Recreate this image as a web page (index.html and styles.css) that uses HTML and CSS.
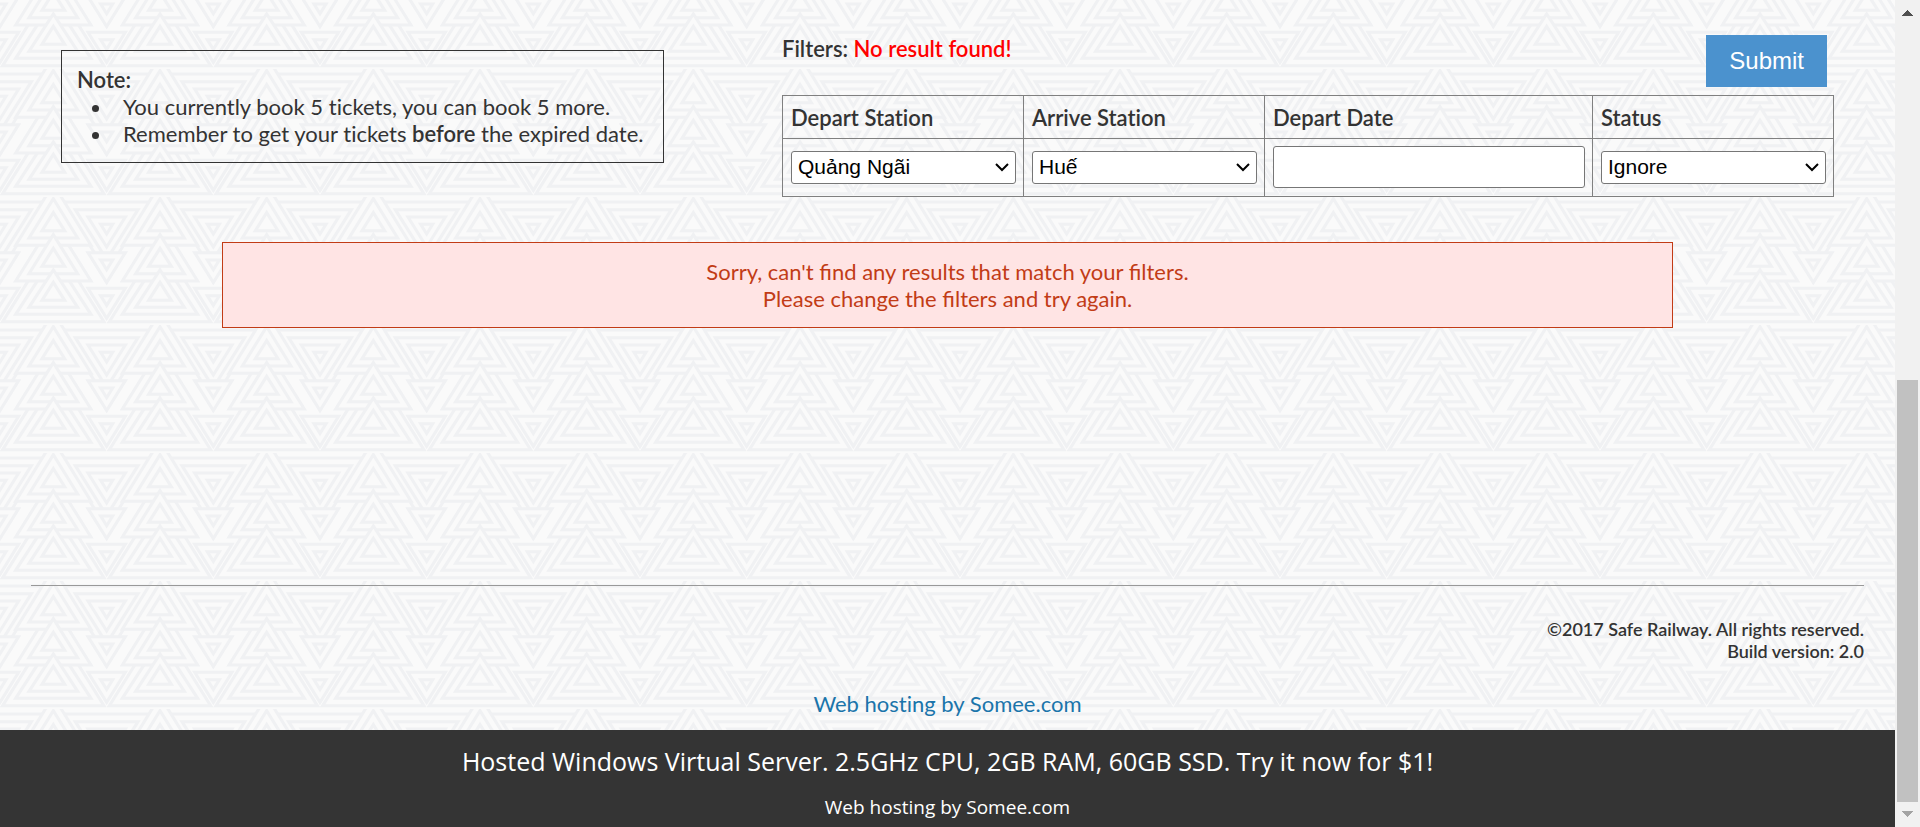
FILE: index.html
```html
<!DOCTYPE html>
<html lang="en">
<head>
<meta charset="utf-8">
<title>Safe Railway</title>
<link rel="stylesheet" href="styles.css">
</head>
<body>
<div class="page">
  <main class="content">
    <div class="top">
      <section class="note">
        <strong>Note:</strong>
        <ul class="note-list">
          <li>You currently book 5 tickets, you can book 5 more.</li>
          <li>Remember to get your tickets <strong>before</strong> the expired date.</li>
        </ul>
      </section>
      <form class="filters">
        <div class="filters-head">
          <strong>Filters: <span class="filters-error">No result found!</span></strong>
          <button class="submit" type="submit">Submit</button>
        </div>
        <table class="filter-table">
          <colgroup><col class="col-select"><col class="col-select"><col class="col-date"><col class="col-select"></colgroup>
          <thead>
            <tr>
              <th><label for="depart">Depart Station</label></th>
              <th><label for="arrive">Arrive Station</label></th>
              <th><label for="date">Depart Date</label></th>
              <th><label for="status">Status</label></th>
            </tr>
          </thead>
          <tbody>
            <tr>
              <td><select id="depart" class="select"><option>Quảng Ngãi</option></select></td>
              <td><select id="arrive" class="select"><option>Huế</option></select></td>
              <td><input id="date" class="date" type="text"></td>
              <td><select id="status" class="select"><option>Ignore</option></select></td>
            </tr>
          </tbody>
        </table>
      </form>
    </div>
    <div class="alert" role="alert">Sorry, can't find any results that match your filters.<br>Please change the filters and try again.</div>
    <footer class="footer">©2017 Safe Railway. All rights reserved.<br>Build version: 2.0</footer>
    <a class="host-link" href="#">Web hosting by Somee.com</a>
    <div class="promo">
      <a class="promo-main" href="#">Hosted Windows Virtual Server. 2.5GHz CPU, 2GB RAM, 60GB SSD. Try it now for $1!</a>
      <a class="promo-sub" href="#">Web hosting by Somee.com</a>
    </div>
  </main>
  <div class="scrollbar" aria-hidden="true">
    <svg class="scroll-arrow" viewBox="0 0 25 25" shape-rendering="crispEdges"><path fill="#505050" d="M7 16 12.500 10 18 16z"/></svg>
    <div class="scroll-space"></div>
    <div class="scroll-thumb"></div>
    <svg class="scroll-arrow" viewBox="0 0 25 25" shape-rendering="crispEdges"><path fill="#a3a3a3" d="M7 9 12.500 15 18 9z"/></svg>
  </div>
</div>
</body>
</html>
```
FILE: styles.css
```css
* { box-sizing: border-box; }

body {
  margin: 0;
  color: #333;
  font: 22px/27px Lato, "Open Sans", sans-serif;
  font-variant-ligatures: none;
}

strong,
th,
.footer {
  font-weight: 600;
}

.page {
  display: flex;
  min-height: 100vh;
  background-color: #fafafa;
  background-position: 0 69px;
  /* triangle weave: inverted triangles first, then the stacked upright ones */
  background-image: url("data:image/svg+xml,%3Csvg xmlns='http://www.w3.org/2000/svg' width='320' height='128' viewBox='0 340 960 384'%3E%3Cdefs%3E%3Cg id='i'%3E%3Cpath d='M-132 355H132L0 566z'/%3E%3Cpath d='M-94 378H94L0 528z'/%3E%3Cpath d='M-56 400H56L0 490z'/%3E%3Cpath d='M-18 422H18L0 451z'/%3E%3Cpath d='M-56 507H56L0 597z'/%3E%3Cpath d='M-18 529H18L0 558z'/%3E%3Cpath d='M-56 614H56L0 704z'/%3E%3Cpath d='M-18 636H18L0 665z'/%3E%3C/g%3E%3Cg id='t'%3E%3Cpath d='M-152 714H152L0 471z'/%3E%3Cpath d='M-113 692H113L0 518z'/%3E%3Cpath d='M-113 592H113L0 411z'/%3E%3Cpath d='M-113 485H113L0 301z'/%3E%3Cpath d='M-73 463H73L0 345z'/%3E%3Cpath d='M-34 441H34L0 387z'/%3E%3Cpath d='M-73 570H73L0 453z'/%3E%3Cpath d='M-34 548H34L0 494z'/%3E%3Cpath d='M-73 671H73L0 559z'/%3E%3Cpath d='M-34 650H34L0 596z'/%3E%3C/g%3E%3C/defs%3E%3Cg fill='%23fafafa' stroke='%23f0f1f3' stroke-width='9'%3E%3Cuse href='%23i'/%3E%3Cuse href='%23i' x='320'/%3E%3Cuse href='%23i' x='640'/%3E%3Cuse href='%23i' x='960'/%3E%3Cuse href='%23t' x='160'/%3E%3Cuse href='%23t' x='480'/%3E%3Cuse href='%23t' x='800'/%3E%3C/g%3E%3C/svg%3E");
}

.content {
  flex: 1;
  display: flex;
  flex-direction: column;
}

.top {
  display: flex;
  justify-content: space-between;
  align-items: flex-start;
  padding: 35px 61px 0;
}

.note {
  margin-top: 15px;
  padding: 15px 20px 15px 15px;
  border: 1px solid #333;
}

.note-list {
  margin: 0;
  padding-left: 36px;
}

.note-list li { padding-left: 10px; }

.filters-head {
  display: flex;
  justify-content: space-between;
  padding-right: 7px;
  margin-bottom: 8px;
}

.filters-error { color: red; }

.submit {
  height: 52px;
  padding: 0 23px;
  border: 0;
  background: #4b92ce;
  color: #fff;
  font: 24px/28px "Liberation Sans", Arial, sans-serif;
}

.filter-table { border-collapse: collapse; }

.filter-table th,
.filter-table td {
  border: 1px solid #808080;
  text-align: left;
}

.filter-table th { padding: 8px 7px 7px 8px; }
.filter-table td { padding: 7px 7px 8px 8px; }

.col-select { width: 241px; }
.col-date { width: 328px; }

.select,
.date {
  display: block;
  width: 100%;
  border: 1px solid #767676;
  border-radius: 3px;
  background-color: #fff;
  color: #000;
  font: 21px/24px "Liberation Sans", Arial, sans-serif;
}

.select {
  appearance: none;
  height: 33px;
  padding: 0 28px 0 6px;
  background-image: url("data:image/svg+xml,%3Csvg xmlns='http://www.w3.org/2000/svg' width='14' height='10'%3E%3Cpath d='M1 2 7 8 13 2' fill='none' stroke='%23000' stroke-width='2'/%3E%3C/svg%3E");
  background-repeat: no-repeat;
  background-position: right 6px center;
}

.date { height: 42px; }

.alert {
  margin: 45px 222px 0;
  padding: 15px;
  border: 1px solid #c23c16;
  background: #ffe4e4;
  color: #c23c16;
  font-variant-ligatures: normal;
  text-align: center;
}

.footer {
  margin: 257px 31px 0;
  padding-top: 32px;
  border-top: 1px solid #999;
  font-size: 18px;
  line-height: 22px;
  text-align: right;
}

.host-link {
  margin: 28px 0 13px;
  align-self: center;
  color: #1b75ab;
  text-decoration: none;
}

.promo {
  flex: 1;
  display: flex;
  flex-direction: column;
  align-items: center;
  gap: 15px;
  padding: 13px 0 6px;
  background: rgba(48, 48, 48, 0.98);
  font-family: "Open Sans", "Noto Sans", sans-serif;
}

.promo a {
  color: #fff;
  text-decoration: none;
}

.promo-main {
  font-size: 25px;
  line-height: 36px;
}

.promo-sub {
  font-size: 19px;
  line-height: 26px;
}

.scrollbar {
  flex: none;
  display: flex;
  flex-direction: column;
  width: 25px;
  background: #f1f1f1;
}

.scroll-arrow { height: 25px; }
.scroll-space { flex: 355; }

.scroll-thumb {
  flex: 422;
  margin: 0 2px;
  background: #c1c1c1;
}
```
